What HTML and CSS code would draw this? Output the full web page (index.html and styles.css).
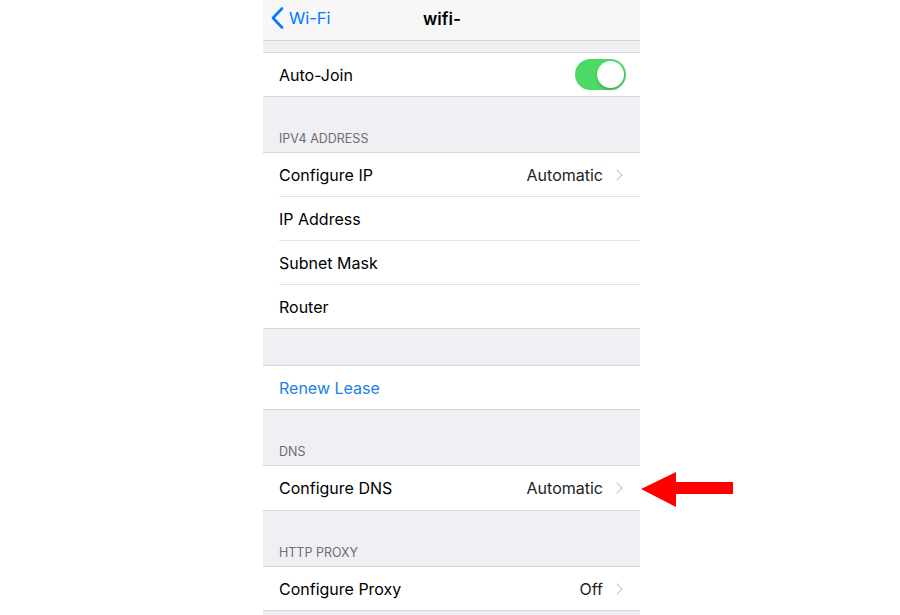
FILE: index.html
```html
<!DOCTYPE html>
<html lang="en">
<head>
  <meta charset="UTF-8" />
  <title>wifi-</title>
  <link rel="stylesheet" href="styles.css">
</head>
<body>
  <div class="stage">
    <div class="phone">
      <div class="navbar">
        <a class="back" href="#">
          <svg class="back-icon" width="13" height="22" viewBox="0 0 13 22">
            <path d="M11 1.5 L2 11 L11 20.5" fill="none" stroke="#007aff" stroke-width="2.6" stroke-linecap="round" stroke-linejoin="round"/>
          </svg>
          <span>Wi-Fi</span>
        </a>
        <div class="title">wifi-</div>
      </div>

      <div class="gap gap-top"></div>
      <div class="group">
        <div class="row">
          <span class="label">Auto-Join</span>
          <span class="toggle on"><span class="knob"></span></span>
        </div>
      </div>

      <div class="section-head">IPv4 Address</div>
      <div class="group">
        <div class="row">
          <span class="label">Configure IP</span>
          <span class="value">Automatic</span>
          <span class="chevron"></span>
        </div>
        <div class="row"><span class="label">IP Address</span></div>
        <div class="row"><span class="label">Subnet Mask</span></div>
        <div class="row"><span class="label">Router</span></div>
      </div>

      <div class="gap"></div>
      <div class="group">
        <div class="row"><span class="label link">Renew Lease</span></div>
      </div>

      <div class="section-head">DNS</div>
      <div class="group">
        <div class="row tall">
          <span class="label">Configure DNS</span>
          <span class="value">Automatic</span>
          <span class="chevron"></span>
        </div>
      </div>

      <div class="section-head">HTTP Proxy</div>
      <div class="group">
        <div class="row">
          <span class="label">Configure Proxy</span>
          <span class="value">Off</span>
          <span class="chevron"></span>
        </div>
      </div>
    </div>

    <!-- pointer next to the DNS row -->
    <svg class="arrow" width="94" height="36" viewBox="0 0 94 36">
      <polygon points="0,17 35,0 35,10 92,10 92,22 35,22 35,35" fill="#ff0000"/>
    </svg>
  </div>
</body>
</html>
```

FILE: styles.css
```css
body {
  margin: 0;
  background: #fff;
  font-family: "Inter", "Roboto", sans-serif;
  color: #000;
}
.stage {
  position: relative;
  width: 900px;
  height: 615px;
  overflow: hidden;
}
.phone {
  width: 377px;
  margin-left: 263px;
  height: 615px;
  background: #efeff4;
  overflow: hidden;
}
.navbar {
  position: relative;
  height: 40px;
  background: #f7f7f8;
  border-bottom: 1px solid #d2d2d6;
  display: flex;
  align-items: center;
  justify-content: center;
}
.back {
  position: absolute;
  left: 8px;
  top: 7px;
  display: flex;
  align-items: center;
  gap: 5px;
  color: #007aff;
  text-decoration: none;
  font-size: 16.5px;
}
.title {
  font-weight: 600;
  font-size: 17px;
  padding-bottom: 3px;
  margin-left: -19px;
}
.gap {
  height: 36px;
}
.gap-top {
  height: 11px;
}
.group {
  background: #fff;
  border-top: 1px solid #d8d8dc;
  border-bottom: 1px solid #d8d8dc;
}
.row {
  height: 43px;
  display: flex;
  align-items: center;
  padding: 0 16px;
  font-size: 16px;
  position: relative;
}
.row.tall {
  height: 44px;
}
/* inset hairline between rows of one group */
.row + .row {
  border-top: 1px solid transparent;
}
.row + .row::before {
  content: "";
  position: absolute;
  top: -1px;
  left: 16px;
  right: 0;
  border-top: 1px solid #e2e2e5;
}
.label {
  flex: 1;
}
.link {
  color: #1a82e8;
}
.value {
  color: #222;
}
.chevron {
  width: 7px;
  height: 7px;
  border-top: 1.5px solid #c4c4c8;
  border-right: 1.5px solid #c4c4c8;
  transform: rotate(45deg);
  margin-left: 10px;
  margin-right: 3px;
}
.section-head {
  height: 55px;
  box-sizing: border-box;
  padding: 0 16px 6px;
  display: flex;
  align-items: flex-end;
  font-size: 12.5px;
  text-transform: uppercase;
  color: #6d6d72;
}
.toggle {
  width: 51px;
  height: 31px;
  border-radius: 16px;
  background: #4cd964;
  position: relative;
  margin-right: -2px;
}
.knob {
  position: absolute;
  right: 2px;
  top: 2px;
  width: 27px;
  height: 27px;
  border-radius: 50%;
  background: #fff;
  box-shadow: 0 2px 3px rgba(0, 0, 0, 0.2);
}
.arrow {
  position: absolute;
  left: 641px;
  top: 472px;
}
```
